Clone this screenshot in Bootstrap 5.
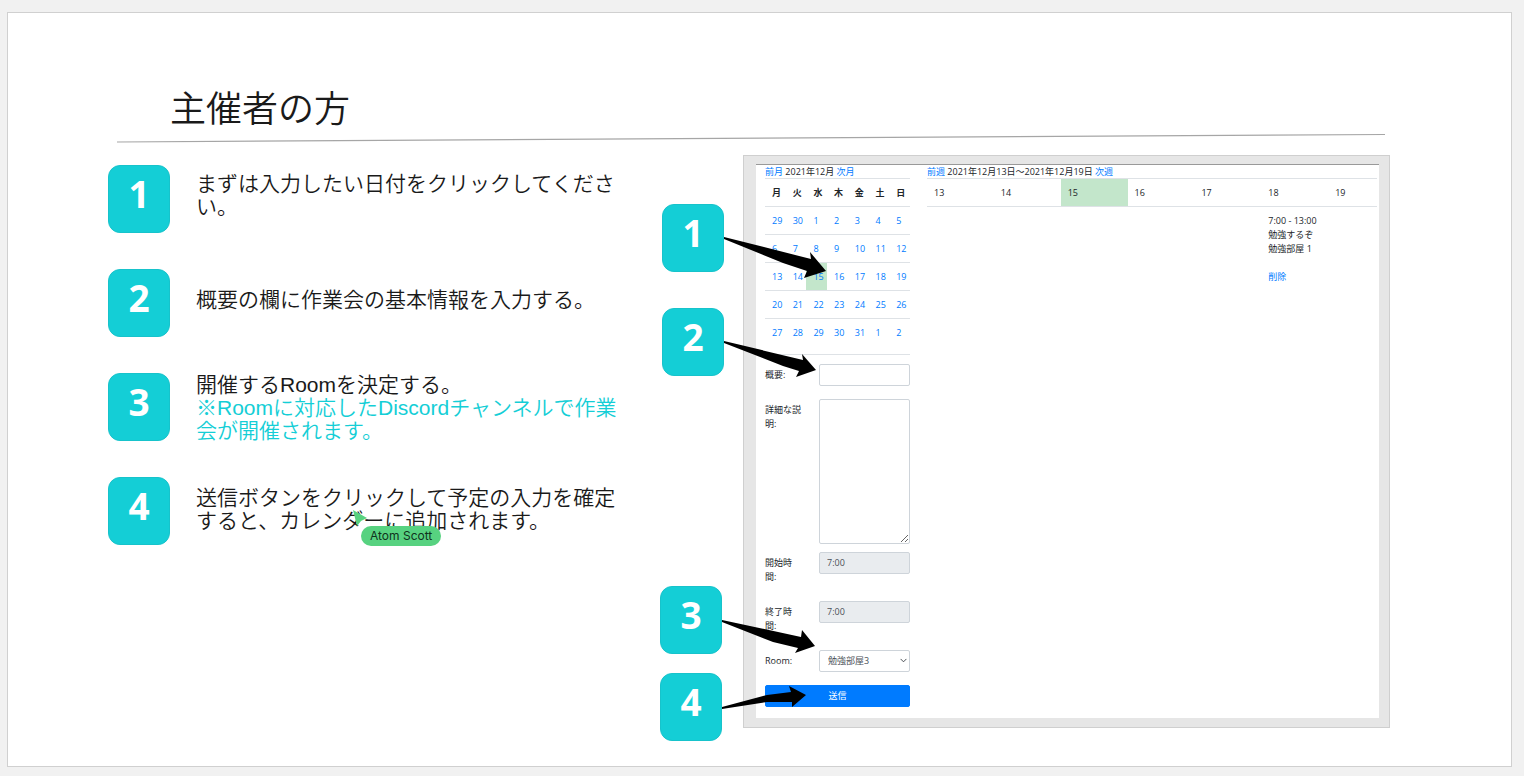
<!DOCTYPE html>
<html lang="ja">
<head>
<meta charset="utf-8">
<meta name="viewport" content="width=device-width, initial-scale=1">
<title>主催者の方</title>
<link href="https://cdn.jsdelivr.net/npm/bootstrap@5.3.0/dist/css/bootstrap.min.css" rel="stylesheet">
<style>
  body { background: #f1f1f1; padding: 12px 12px 9px 7px; font-family: "Liberation Sans", "Noto Sans CJK JP", sans-serif; color: #1a1a1a; }
  .slide { min-height: calc(100vh - 21px); background: #fff; border: 1px solid #d0d0d0; }
  .slide-title { font-size: 36px; line-height: 47px; font-weight: 350; padding: 73px 0 0 162px; }
  .slide-rule { width: calc(100% - 235px); height: 10px; margin: 0 126px 12px 109px; }
  .slide-grid { display: grid; grid-template-columns: minmax(0, 552fr) 83px minmax(0, 647fr); padding: 0 121px 0 100px; }

  /* numbered tiles */
  .tile { width: 62px; height: 68px; flex: none; border-radius: 12px; background: #14ced6; border: 1px solid #17c3cb; color: #fff; font: 700 37px/56px "Noto Sans", sans-serif; text-align: center; }
  .steps { gap: 36px; padding-top: 10px; }
  .step { gap: 26px; height: 68px; }
  .step-text { font-size: 21px; line-height: 23px; font-weight: 350; max-width: 430px; }
  .accent { color: #14ced6; }

  /* collaborator pointer */
  .pointer { left: 156px; top: 24px; }
  .pointer-name { margin: 0 0 0 9px; padding: 0 9px; border-radius: 10px; background: #57d280; color: #10331d; font: 400 12px/20px Inter, sans-serif; }

  .pins { padding-top: 49px; }
  .pins-top { gap: 36px; padding-left: 2px; }
  .pins-bottom { gap: 19px; padding-top: 210px; }
  .pin-arrow { left: 100%; top: 0; margin-left: 1px; z-index: 2; pointer-events: none; }

  /* calendar application */
  .frame { background: #e6e6e6; border: 1px solid #cfcfcf; padding: 8px 10px 9px 12px; }
  .app { background: #fff; border-top: 1px solid #999; padding: 0 2px 11px 9px; gap: 17px; font: 400 9px/14px "Open Sans", "Noto Sans CJK JP", sans-serif; color: #212529; }
  .app a { color: #007bff; text-decoration: none; }
  .app-side { width: 145px; flex: none; }
  .app-range { line-height: 13px; }
  .grid-table { width: 100%; table-layout: fixed; border-collapse: collapse; }
  .grid-table th, .grid-table td { border-top: 1px solid #dee2e6; padding: 7px 0 6px 7px; height: 28px; vertical-align: top; }
  .week-table th { font-weight: 400; width: 14.86%; }
  .week-table th:last-child { width: auto; }
  .grid-table .is-picked { background: #c3e6cb; }
  .app-rule { margin: 7px 0 9px; border-top: 1px solid #dee2e6; opacity: 1; }
  .field { margin-bottom: 13px; }
  .field label { width: 37px; margin-right: 17px; padding: 4px 0; flex: none; }
  .app .form-control, .app .form-select { font: inherit; color: #495057; min-height: 22px; height: 22px; padding: 3px 7px; border: 1px solid #ced4da; border-radius: 2px; }
  .app .form-control:disabled { background: #e9ecef; }
  .app textarea.form-control { height: 145px; }
  .app .form-select { padding-left: 8px; background-position: right 2px center; background-size: 7px 7px; }
  .app .btn { font: inherit; height: 22px; padding: 0; border-radius: 2px; background: #007bff; border-color: #007bff; }
</style>
</head>
<body>
<main class="slide">
  <h1 class="slide-title m-0">主催者の方</h1>
  <svg class="slide-rule d-block" viewBox="0 0 1268 10" preserveAspectRatio="none" aria-hidden="true"><path d="M0 9L1268 1.500" stroke="#a6a6a6" stroke-width="1.200"/></svg>

  <div class="slide-grid">
    <section class="steps d-flex flex-column">
      <div class="step d-flex align-items-center"><div class="tile">1</div><div class="step-text pb-2">まずは入力したい日付をクリックしてください。</div></div>
      <div class="step d-flex align-items-center"><div class="tile">2</div><div class="step-text pb-2">概要の欄に作業会の基本情報を入力する。</div></div>
      <div class="step d-flex align-items-center"><div class="tile">3</div><div class="step-text">開催するRoomを決定する。<br><span class="accent">※Roomに対応したDiscordチャンネルで作業会が開催されます。</span></div></div>
      <div class="step d-flex align-items-center"><div class="tile">4</div>
        <div class="step-text pb-1 position-relative">送信ボタンをクリックして予定の入力を確定すると、カレンダーに追加されます。
          <div class="pointer position-absolute">
            <svg class="d-block" width="16" height="16" viewBox="0 0 16 16" aria-hidden="true"><path d="M1 0L15 8L9 11L5 16Z" fill="#57d280"/></svg>
            <div class="pointer-name text-nowrap">Atom Scott</div>
          </div>
        </div>
      </div>
    </section>

    <section class="pins">
      <div class="pins-top d-flex flex-column">
        <div class="tile position-relative">1<svg class="pin-arrow position-absolute" width="104" height="76"><path d="M0 32L87 54L86 47L102 66L80 73L83 66L59 58L0 34Z"/></svg></div>
        <div class="tile position-relative">2<svg class="pin-arrow position-absolute" width="104" height="76"><path d="M0 32L79 51L78 45L92 61L72 68L75 62L59 57L0 34Z"/></svg></div>
      </div>
      <div class="pins-bottom d-flex flex-column">
        <div class="tile position-relative">3<svg class="pin-arrow position-absolute" width="104" height="76"><path d="M0 33L79 50L80 43L93 59L73 66L76 61L51 55L0 35Z"/></svg></div>
        <div class="tile position-relative">4<svg class="pin-arrow position-absolute" width="104" height="76"><path d="M0 33L45 21L69 18L67 12L84 21L70 33V28L45 28L0 35Z"/></svg></div>
      </div>
    </section>

    <section class="frame align-self-start">
      <div class="app d-flex">
        <div class="app-side">
          <div class="app-range"><a href="#">前月</a> 2021年12月 <a href="#">次月</a></div>
          <table class="grid-table">
            <thead><tr><th>月</th><th>火</th><th>水</th><th>木</th><th>金</th><th>土</th><th>日</th></tr></thead>
            <tbody>
              <tr><td><a href="#">29</a></td><td><a href="#">30</a></td><td><a href="#">1</a></td><td><a href="#">2</a></td><td><a href="#">3</a></td><td><a href="#">4</a></td><td><a href="#">5</a></td></tr>
              <tr><td><a href="#">6</a></td><td><a href="#">7</a></td><td><a href="#">8</a></td><td><a href="#">9</a></td><td><a href="#">10</a></td><td><a href="#">11</a></td><td><a href="#">12</a></td></tr>
              <tr><td><a href="#">13</a></td><td><a href="#">14</a></td><td class="is-picked"><a href="#">15</a></td><td><a href="#">16</a></td><td><a href="#">17</a></td><td><a href="#">18</a></td><td><a href="#">19</a></td></tr>
              <tr><td><a href="#">20</a></td><td><a href="#">21</a></td><td><a href="#">22</a></td><td><a href="#">23</a></td><td><a href="#">24</a></td><td><a href="#">25</a></td><td><a href="#">26</a></td></tr>
              <tr><td><a href="#">27</a></td><td><a href="#">28</a></td><td><a href="#">29</a></td><td><a href="#">30</a></td><td><a href="#">31</a></td><td><a href="#">1</a></td><td><a href="#">2</a></td></tr>
            </tbody>
          </table>
          <hr class="app-rule">
          <form>
            <div class="field d-flex align-items-start"><label for="summary">概要:</label><input id="summary" class="form-control" type="text"></div>
            <div class="field d-flex align-items-start mb-2"><label for="detail">詳細な説明:</label><textarea id="detail" class="form-control"></textarea></div>
            <div class="field d-flex align-items-start"><label for="start">開始時間:</label><input id="start" class="form-control" type="text" value="7:00" disabled></div>
            <div class="field d-flex align-items-start"><label for="end">終了時間:</label><input id="end" class="form-control" type="text" value="7:00" disabled></div>
            <div class="field d-flex align-items-start"><label for="room">Room:</label><select id="room" class="form-select"><option>勉強部屋3</option></select></div>
            <button type="button" class="btn btn-primary w-100 d-block">送信</button>
          </form>
        </div>
        <div class="flex-fill overflow-hidden">
          <div class="app-range"><a href="#">前週</a> 2021年12月13日～2021年12月19日 <a href="#">次週</a></div>
          <table class="grid-table week-table">
            <thead><tr><th>13</th><th>14</th><th class="is-picked">15</th><th>16</th><th>17</th><th>18</th><th>19</th></tr></thead>
            <tbody><tr><td></td><td></td><td></td><td></td><td></td><td>7:00 - 13:00<br>勉強するぞ<br>勉強部屋 1<br><br><a href="#">削除</a></td><td></td></tr></tbody>
          </table>
        </div>
      </div>
    </section>
  </div>
</main>
<script src="https://cdn.jsdelivr.net/npm/bootstrap@5.3.0/dist/js/bootstrap.bundle.min.js"></script>
</body>
</html>
